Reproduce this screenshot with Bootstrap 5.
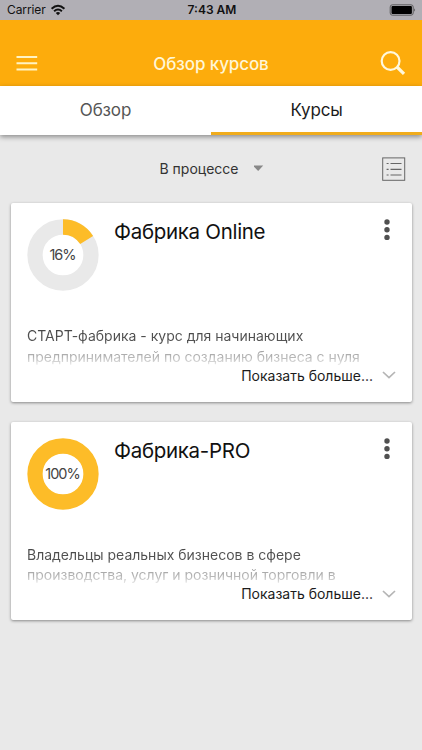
<!DOCTYPE html>
<html lang="ru">
<head>
<meta charset="utf-8">
<meta name="viewport" content="width=device-width, initial-scale=1">
<title>Обзор курсов</title>
<link href="https://cdn.jsdelivr.net/npm/bootstrap@5.3.0/dist/css/bootstrap.min.css" rel="stylesheet">
<style>
body{font-family:Inter,"Liberation Sans",sans-serif;background:#e9e9e9;color:#111;height:750px;overflow:hidden}
svg{display:block;flex-shrink:0}
.t{white-space:nowrap;line-height:20px}
.status-bar{height:20px;background:#b1afb5;padding:0 6px 0 7px;font-size:12px;color:#111}
.status-side{flex:1 1 0}
.status-bar .t{line-height:22px}
.carrier{letter-spacing:-.1px}
.clock{font-weight:600;margin-left:1px}
.app-bar{height:66px;background:#fdac0c;padding:20px 16px 0}
.app-title{font-size:17px;font-weight:500;letter-spacing:-.1px;color:#fff6d6;margin-left:4px;padding-top:1px}
.app-tabs{height:49px;background:#fff;box-shadow:0 2px 5px rgba(0,0,0,.4)}
.app-tabs .tab{flex:1;border:0;border-bottom:3px solid transparent;border-radius:0;padding:2px 0 0;font-size:17px;letter-spacing:-.15px;color:#555;display:flex;align-items:center;justify-content:center}
.app-tabs .tab.active{border-color:#f0ac1c;color:#1c1c1c;background:none}
.filters{height:68px;padding:0 16px 0 159.500px}
.filter-name{font-size:14px;color:#333}
.course{height:198.5px;border:0;border-radius:2px;margin:0 10.500px 20px;box-shadow:0 1px 3px rgba(0,0,0,.42);padding:16px 15.500px 0 16px}
.course-title{font-size:20.5px;line-height:26px;letter-spacing:-.3px;margin:0 0 0 15.500px;font-weight:400;color:#111}
.kebab{margin:0 6px 0 auto}
.desc{font-size:14px;line-height:20.5px;margin:35px -10px 0 0;padding-left:.5px;background:linear-gradient(#444 0,#555 16px,#a0a0a0 23px,#b4b4b4 31px,#fff 42px);-webkit-background-clip:text;background-clip:text;color:transparent;height:41px;white-space:nowrap}
.more{font-size:14px;color:#1c1c1c;margin-top:-1.500px}
.more .t{margin-right:7px}
</style>
<script src="https://cdn.jsdelivr.net/npm/bootstrap@5.3.0/dist/js/bootstrap.bundle.min.js"></script>
</head>
<body>
<div class="status-bar d-flex align-items-center">
  <div class="status-side d-flex align-items-center gap-1"><span class="t carrier">Carrier</span>
    <svg width="16" height="12" viewBox="0 0 16 12"><g fill="none" stroke="#111" stroke-width="2"><path d="M1.6 4.7Q8 -1.2 14.4 4.7"/><path d="M4.1 7.3Q8 3.8 11.9 7.3"/></g><path fill="#111" d="M8 11.2 5.8 9Q8 7.2 10.2 9Z"/></svg>
  </div>
  <span class="t clock">7:43 AM</span>
  <div class="status-side d-flex justify-content-end">
    <svg width="27" height="12" viewBox="0 0 27 12"><rect x="1.2" y=".8" width="23" height="10.4" rx="2.2" fill="none" stroke="#555" stroke-width=".9"/><rect x="2.5" y="2.1" width="20.4" height="7.8" rx="1" fill="#000"/><path d="M25.3 4.3q1.5 1.7 0 3.4z" fill="#333"/></svg>
  </div>
</div>
<header class="app-bar d-flex align-items-center justify-content-between">
  <svg width="22" height="16" viewBox="0 0 22 16"><path d="M.5 2h20.700M.5 8.200h20.700M.5 14.500h20.700" stroke="#fff3c4" stroke-width="2"/></svg>
  <h1 class="app-title t mb-0">Обзор курсов</h1>
  <svg width="26" height="26" viewBox="0 0 26 26" fill="none" stroke="#fff8dc"><circle cx="10.600" cy="11" r="8.900" stroke-width="2.200"/><path d="m17 17 7 6.800" stroke-width="3.200"/></svg>
</header>
<nav class="app-tabs nav">
  <a class="tab t text-decoration-none">Обзор</a><a class="tab t active text-decoration-none">Курсы</a>
</nav>
<main>
  <div class="filters d-flex align-items-center">
    <span class="filter-name t">В процессе</span>
    <svg class="ms-3" width="10" height="8" viewBox="0 0 10 8"><path d="M-.3 .3h10.300L5 5.600z" fill="#888" transform="translate(-.8 .3)"/></svg>
    <svg class="ms-auto" width="24" height="24" viewBox="0 0 24 24" fill="none" stroke="#666"><rect x=".7" y=".9" width="22" height="22.400"/><path d="M8.500 6.500h11M8.500 12.300h11M8.500 18h11M4.600 6.500h2M4.600 12.300h2M4.600 18h2" stroke-width="1.200"/></svg>
  </div>
  <article class="card course">
    <div class="d-flex align-items-start">
      <svg width="72" height="72" viewBox="0 0 72 72"><circle cx="36" cy="36" r="28" fill="none" stroke="#e9e9e9" stroke-width="15.300"/><circle cx="36" cy="36" r="28" fill="none" stroke="#fdbc28" stroke-width="15.300" pathLength="100" stroke-dasharray="16 84" transform="rotate(-90 36 36)"/><text x="35.500" y="41" text-anchor="middle" font-size="14.500" letter-spacing="-1" fill="#444">16%</text></svg>
      <h2 class="course-title t">Фабрика Online</h2>
      <svg class="kebab" width="6" height="22" viewBox="0 0 6 22" fill="#505050"><circle cx="3" cy="3" r="2.700"/><circle cx="3" cy="10.700" r="2.700"/><circle cx="3" cy="18.400" r="2.700"/></svg>
    </div>
    <p class="desc">СТАРТ-фабрика - курс для начинающих<br>предпринимателей по созданию бизнеса с нуля</p>
    <div class="more d-flex align-items-center justify-content-end"><span class="t">Показать больше...</span><svg width="16" height="9" viewBox="0 0 16 9"><path d="m3 1 6 5.700 6-5.700" fill="none" stroke="#b5b5b5" stroke-width="1.700"/></svg></div>
  </article>
  <article class="card course">
    <div class="d-flex align-items-start">
      <svg width="72" height="72" viewBox="0 0 72 72"><circle cx="36" cy="36" r="28" fill="none" stroke="#fdbc28" stroke-width="15.300"/><text x="35.500" y="41" text-anchor="middle" font-size="14.500" letter-spacing="-1" fill="#444">100%</text></svg>
      <h2 class="course-title t">Фабрика-PRO</h2>
      <svg class="kebab" width="6" height="22" viewBox="0 0 6 22" fill="#505050"><circle cx="3" cy="3" r="2.700"/><circle cx="3" cy="10.700" r="2.700"/><circle cx="3" cy="18.400" r="2.700"/></svg>
    </div>
    <p class="desc">Владельцы реальных бизнесов в сфере<br>производства, услуг и розничной торговли в</p>
    <div class="more d-flex align-items-center justify-content-end"><span class="t">Показать больше...</span><svg width="16" height="9" viewBox="0 0 16 9"><path d="m3 1 6 5.700 6-5.700" fill="none" stroke="#b5b5b5" stroke-width="1.700"/></svg></div>
  </article>
</main>
</body>
</html>
